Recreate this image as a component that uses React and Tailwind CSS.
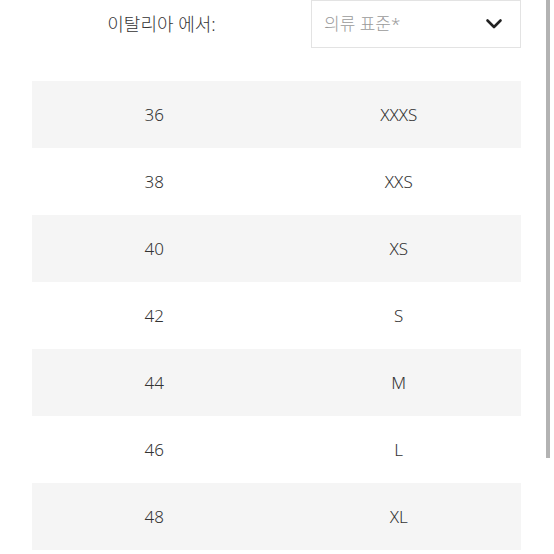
import React from "react";

const sizes = [
  ["36", "XXXS"],
  ["38", "XXS"],
  ["40", "XS"],
  ["42", "S"],
  ["44", "M"],
  ["46", "L"],
  ["48", "XL"],
];

const App = () => {
  return (
    <div
      className="relative w-[554px] h-[554px] overflow-hidden bg-white text-[#333] font-light"
      style={{ fontFamily: '"Noto Sans", "Noto Sans CJK KR", sans-serif' }}
    >
      {/* header: country + standard picker */}
      <div className="flex items-center h-[48px] ml-[32px] w-[489px]">
        <div className="w-[279px] flex justify-center pr-[20px] text-[18px] text-[#333]">
          이탈리아 에서:
        </div>
        <div className="flex items-center justify-between w-[210px] h-[48px] border border-[#e3e3e3] pl-[12px] pr-[16px]">
          <span className="text-[17px] text-[#9a9a9a]">의류 표준*</span>
          <svg width="20" height="20" viewBox="0 0 20 20" fill="none">
            <path d="M3.5 6.5 L10 13 L16.5 6.5" stroke="#222" strokeWidth="2.6" strokeLinecap="round" strokeLinejoin="round" />
          </svg>
        </div>
      </div>

      {/* size table */}
      <div className="mt-[33px] ml-[32px] w-[489px] flex flex-col">
        {sizes.map(([it, intl], i) => (
          <div
            key={it}
            className={`flex items-center h-[67px] text-[17px] ${i % 2 === 0 ? "bg-[#f5f5f5]" : "bg-white"}`}
          >
            <div className="w-1/2 text-center">{it}</div>
            <div className="w-1/2 text-center">{intl}</div>
          </div>
        ))}
      </div>

      {/* scrollbar thumb */}
      <div className="absolute right-[4px] top-0 w-[4px] h-[458px] bg-[#b3b3b3]" />
    </div>
  );
};

export default App;
